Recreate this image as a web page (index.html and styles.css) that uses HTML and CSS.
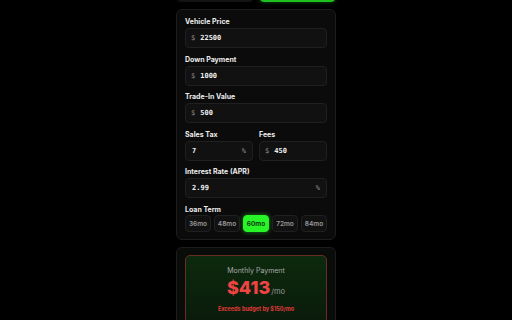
FILE: index.html
```html
<!DOCTYPE html>
<html>
<head>
<meta charset="utf-8">
<link rel="stylesheet" href="styles.css">
</head>
<body>
<div class="wrap">
  <div class="tabs">
    <div class="tab"></div>
    <div class="tab tab-active"></div>
  </div>
  <div class="card">
    <div class="field">
      <div class="label">Vehicle Price</div>
      <div class="input"><span class="pre">$</span><span class="val">22500</span></div>
    </div>
    <div class="field">
      <div class="label">Down Payment</div>
      <div class="input"><span class="pre">$</span><span class="val">1000</span></div>
    </div>
    <div class="field">
      <div class="label">Trade-In Value</div>
      <div class="input"><span class="pre">$</span><span class="val">500</span></div>
    </div>
    <div class="row">
      <div class="field">
        <div class="label">Sales Tax</div>
        <div class="input"><span class="val grow">7</span><span class="suf">%</span></div>
      </div>
      <div class="field">
        <div class="label">Fees</div>
        <div class="input"><span class="pre">$</span><span class="val">450</span></div>
      </div>
    </div>
    <div class="field">
      <div class="label">Interest Rate (APR)</div>
      <div class="input"><span class="val grow">2.99</span><span class="suf">%</span></div>
    </div>
    <div class="field last">
      <div class="label term-label">Loan Term</div>
      <div class="terms">
        <div class="term">36mo</div>
        <div class="term">48mo</div>
        <div class="term active">60mo</div>
        <div class="term">72mo</div>
        <div class="term">84mo</div>
      </div>
    </div>
  </div>
  <div class="card card2">
    <div class="result">
      <div class="r-title">Monthly Payment</div>
      <div class="r-amount"><span class="big">$413</span><span class="per">/mo</span></div>
      <div class="r-warn">Exceeds budget by $150/mo</div>
    </div>
  </div>
</div>
</body>
</html>
```
FILE: styles.css
```css
html, body {
  margin: 0;
  padding: 0;
  background: #000;
  height: 100%;
  overflow: hidden;
}
body {
  font-family: Inter, "Liberation Sans", sans-serif;
}
.wrap {
  width: 160px;
  margin: 0 auto;
}
.tabs {
  display: flex;
  gap: 7px;
  height: 20px;
  margin-top: -18px;
  margin-bottom: 7px;
  padding: 0 1px;
}
.tab {
  flex: 1;
  background: #131313;
  border-radius: 0 0 4px 4px;
}
.tab-active {
  background: #1fbf1f;
  box-shadow: 0 0 4px rgba(40, 255, 40, 0.35);
}
.card {
  background: #0b0b0b;
  border: 1px solid #1d1d1d;
  border-radius: 6px;
  padding: 7px 8px 7px;
}
.field {
  display: flex;
  flex-direction: column;
  margin-bottom: 6.5px;
  flex: 1;
  min-width: 0;
}
.field.last { margin-bottom: 0; }
.label {
  color: #ececec;
  font-size: 7px;
  font-weight: 700;
  line-height: 9px;
  margin-bottom: 2px;
}
.term-label { margin-bottom: 1.5px; }
.input {
  height: 20px;
  box-sizing: border-box;
  background: #111;
  border: 1px solid #202020;
  border-radius: 4px;
  display: flex;
  align-items: center;
  padding: 0 6px 0 5px;
  font-family: "DejaVu Sans Mono", "Liberation Mono", monospace;
  font-size: 7px;
}
.pre {
  color: #8a8a8a;
  margin-right: 5px;
}
.suf {
  color: #8a8a8a;
}
.val {
  color: #f2f2f2;
  font-weight: 700;
}
.val.grow { flex: 1; padding-left: 1px; }
.row {
  display: flex;
  gap: 6px;
}
.terms {
  display: flex;
  gap: 3px;
}
.term {
  flex: 1;
  height: 17px;
  box-sizing: border-box;
  background: #111;
  border: 1px solid #202020;
  border-radius: 4px;
  color: #9a9a9a;
  font-size: 6.5px;
  font-weight: 600;
  display: flex;
  align-items: center;
  justify-content: center;
}
.term.active {
  background: #27f527;
  border-color: #27f527;
  color: #0d2a0d;
  box-shadow: 0 0 5px rgba(40, 255, 40, 0.5);
}
.card2 {
  margin-top: 7px;
  padding-bottom: 20px;
  background: #0a0c0a;
}
.result {
  border: 1px solid #6a2d22;
  border-radius: 5px;
  background: linear-gradient(180deg, #0c2a0d 0%, #0b1a0b 100%);
  padding: 10px 0 9px;
  text-align: center;
}
.r-title {
  color: #a8a8a8;
  font-size: 7px;
  line-height: 10px;
}
.r-amount {
  line-height: 22px;
  margin-top: 1px;
}
.big {
  color: #f04444;
  font-size: 18px;
  font-weight: 800;
}
.per {
  color: #9a9a9a;
  font-size: 7.5px;
  margin-left: 1px;
}
.r-warn {
  color: #e03a3a;
  font-size: 5.5px;
  font-weight: 700;
  line-height: 10px;
  margin-top: 1px;
}
```
